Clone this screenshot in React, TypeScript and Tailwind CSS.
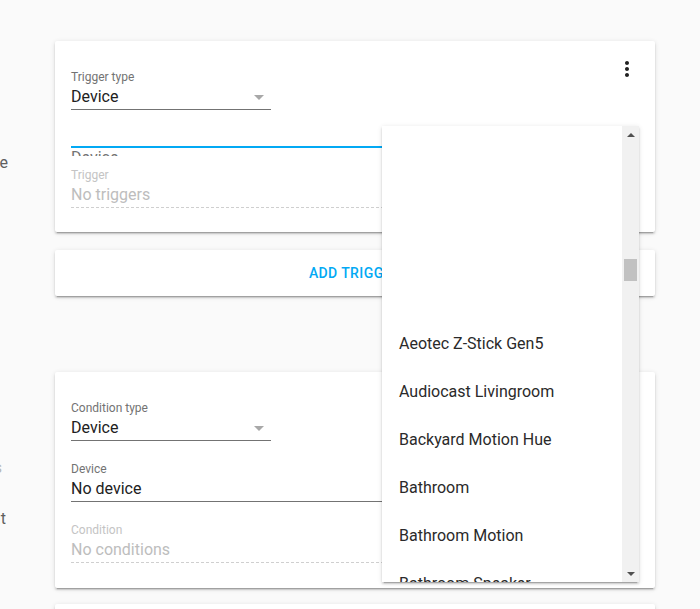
import React from "react";

const cardShadow =
  "shadow-[0_2px_2px_0_rgba(0,0,0,0.14),0_1px_5px_0_rgba(0,0,0,0.12),0_3px_1px_-2px_rgba(0,0,0,0.2)]";

function MoreVert() {
  return (
    <svg width="24" height="24" viewBox="0 0 24 24" className="shrink-0 -mt-[12px]">
      <path
        fill="#212121"
        d="M12 8c1.1 0 2-.9 2-2s-.9-2-2-2-2 .9-2 2 .9 2 2 2zm0 2c-1.1 0-2 .9-2 2s.9 2 2 2 2-.9 2-2-.9-2-2-2zm0 6c-1.1 0-2 .9-2 2s.9 2 2 2 2-.9 2-2-.9-2-2-2z"
      />
    </svg>
  );
}

function DropdownField({ label, value }: { label: string; value: string }) {
  return (
    <div className="w-[200px] flex flex-col">
      <div className="text-[12px] leading-[16px] text-[#737373]">{label}</div>
      <div className="h-[24px] flex items-center justify-between border-b border-[#737373] box-content">
        <span className="text-[16px] leading-[24px] text-[#212121]">{value}</span>
        <svg width="24" height="24" viewBox="0 0 24 24" className="shrink-0">
          <path d="M7 10l5 5 5-5z" fill="#a8a8a8" />
        </svg>
      </div>
    </div>
  );
}

function DisabledField({ label, value }: { label: string; value: string }) {
  return (
    <div className="flex flex-col">
      <div className="text-[12px] leading-[16px] text-[#c4c4c4]">{label}</div>
      <div className="h-[24px] flex items-center border-b border-dashed border-[#cfcfcf] box-content">
        <span className="text-[16px] leading-[24px] text-[#bdbdbd]">{value}</span>
      </div>
    </div>
  );
}

const devices = [
  "Aeotec Z-Stick Gen5",
  "Audiocast Livingroom",
  "Backyard Motion Hue",
  "Bathroom",
  "Bathroom Motion",
  "Bathroom Speaker",
];

export default function App() {
  return (
    <div className="relative w-[700px] h-[609px] overflow-hidden bg-[#fafafa] flex font-['Roboto',sans-serif]">
      {/* left clipped description column */}
      <div className="w-[55px] shrink-0 flex flex-col pt-[151px]">
        <div className="w-[8px] h-[24px] shrink-0 overflow-hidden flex justify-end">
          <span className="whitespace-nowrap text-[16px] leading-[24px] text-[#5f5f5f]">device</span>
        </div>
        <div className="mt-[281px] w-[2px] h-[24px] shrink-0 overflow-hidden flex justify-end">
          <span className="whitespace-nowrap text-[16px] leading-[24px] text-[#b8b8b8]">conditions</span>
        </div>
        <div className="mt-[27px] w-[6px] h-[24px] shrink-0 overflow-hidden flex justify-end">
          <span className="whitespace-nowrap text-[16px] leading-[24px] text-[#5f5f5f]">about it</span>
        </div>
      </div>

      {/* main column */}
      <div className="w-[600px] shrink-0 flex flex-col pt-[41px]">
        {/* trigger card */}
        <div className={`shrink-0 bg-white rounded-[2px] ${cardShadow} h-[191px] px-4 pt-[28px] flex flex-col`}>
          <div className="flex justify-between items-start">
            <DropdownField label="Trigger type" value="Device" />
            <MoreVert />
          </div>
          <div className="mt-[36px] h-[2px] shrink-0 bg-[#03a9f4]" />
          <div className="h-[8px] shrink-0 overflow-hidden">
            <div className="mt-[2px] text-[16px] leading-none text-[#737373]">Device</div>
          </div>
          <div className="mt-[11px]">
            <DisabledField label="Trigger" value="No triggers" />
          </div>
        </div>

        {/* add trigger */}
        <div className={`shrink-0 mt-[18px] bg-white rounded-[2px] ${cardShadow} h-[46px] flex items-center justify-center`}>
          <span className="text-[14px] font-medium tracking-[0.4px] text-[#03a9f4] uppercase">Add trigger</span>
        </div>

        {/* condition card */}
        <div className={`shrink-0 mt-[76px] bg-white rounded-[2px] ${cardShadow} h-[216px] px-4 pt-[28px] flex flex-col`}>
          <div className="flex justify-between items-start">
            <DropdownField label="Condition type" value="Device" />
            <MoreVert />
          </div>
          <div className="mt-[20px] flex flex-col">
            <div className="text-[12px] leading-[16px] text-[#737373]">Device</div>
            <div className="h-[24px] flex items-center border-b border-[#737373] box-content">
              <span className="text-[16px] leading-[24px] text-[#212121]">No device</span>
            </div>
          </div>
          <div className="mt-[20px]">
            <DisabledField label="Condition" value="No conditions" />
          </div>
        </div>

        {/* next card */}
        <div className={`mt-[16px] bg-white rounded-[2px] ${cardShadow} h-[60px] shrink-0`} />
      </div>

      {/* open device dropdown */}
      <div className={`absolute left-[382px] top-[126px] w-[257px] h-[456px] bg-white ${cardShadow} flex`}>
        <div className="flex-1 overflow-hidden flex flex-col">
          <div className="h-[194px] shrink-0" />
          {devices.map((d) => (
            <div key={d} className="h-[48px] shrink-0 flex items-center pl-[17px] text-[16px] text-[#2a2a2a] whitespace-nowrap">
              {d}
            </div>
          ))}
        </div>
        <div className="w-[17px] shrink-0 bg-[#f1f1f1] flex flex-col">
          <div className="h-[17px] shrink-0 flex items-center justify-center">
            <div className="w-0 h-0 border-l-[4px] border-r-[4px] border-b-[4px] border-l-transparent border-r-transparent border-b-[#505050]" />
          </div>
          <div className="h-[116px] shrink-0" />
          <div className="h-[22px] shrink-0 mx-[2px] bg-[#c1c1c1]" />
          <div className="flex-1" />
          <div className="h-[17px] shrink-0 flex items-center justify-center">
            <div className="w-0 h-0 border-l-[4px] border-r-[4px] border-t-[4px] border-l-transparent border-r-transparent border-t-[#505050]" />
          </div>
        </div>
      </div>
    </div>
  );
}
